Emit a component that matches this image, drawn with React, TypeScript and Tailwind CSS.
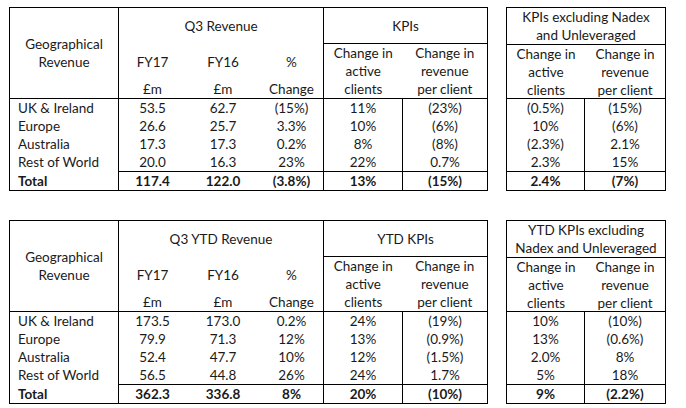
import React from "react";

type Row = { name: string; v: string[] };
type BlockData = {
  rev: string;
  kpi: string;
  ex: [string, string];
  rows: Row[];
  total: string[];
};

const blocks: BlockData[] = [
  {
    rev: "Q3 Revenue",
    kpi: "KPIs",
    ex: ["KPIs excluding Nadex", "and Unleveraged"],
    rows: [
      { name: "UK & Ireland", v: ["53.5", "62.7", "(15%)", "11%", "(23%)", "(0.5%)", "(15%)"] },
      { name: "Europe", v: ["26.6", "25.7", "3.3%", "10%", "(6%)", "10%", "(6%)"] },
      { name: "Australia", v: ["17.3", "17.3", "0.2%", "8%", "(8%)", "(2.3%)", "2.1%"] },
      { name: "Rest of World", v: ["20.0", "16.3", "23%", "22%", "0.7%", "2.3%", "15%"] },
    ],
    total: ["117.4", "122.0", "(3.8%)", "13%", "(15%)", "2.4%", "(7%)"],
  },
  {
    rev: "Q3 YTD Revenue",
    kpi: "YTD KPIs",
    ex: ["YTD KPIs excluding", "Nadex and Unleveraged"],
    rows: [
      { name: "UK & Ireland", v: ["173.5", "173.0", "0.2%", "24%", "(19%)", "10%", "(10%)"] },
      { name: "Europe", v: ["79.9", "71.3", "12%", "13%", "(0.9%)", "13%", "(0.6%)"] },
      { name: "Australia", v: ["52.4", "47.7", "10%", "12%", "(1.5%)", "2.0%", "8%"] },
      { name: "Rest of World", v: ["56.5", "44.8", "26%", "24%", "1.7%", "5%", "18%"] },
    ],
    total: ["362.3", "336.8", "8%", "20%", "(10%)", "9%", "(2.2%)"],
  },
];

function ThreeLine() {
  return (
    <div className="flex flex-col items-center">
      <div className="h-[18px]">Change in</div>
      <div className="h-[18px]">active</div>
      <div className="h-[18px]">clients</div>
    </div>
  );
}
function ThreeLine2() {
  return (
    <div className="flex flex-col items-center">
      <div className="h-[18px]">Change in</div>
      <div className="h-[18px]">revenue</div>
      <div className="h-[18px]">per client</div>
    </div>
  );
}

function Block({ d }: { d: BlockData }) {
  const cellA = (v: string, bold?: boolean) => v;
  return (
    <div className="flex">
      {/* Table A */}
      <div className="flex flex-col border border-black w-[479px]">
        {/* header */}
        <div className="flex h-[91px] border-b border-black">
          <div className="w-[109px] border-r border-black flex flex-col items-center justify-center">
            <div className="h-[18px]">Geographical</div>
            <div className="h-[18px]">Revenue</div>
          </div>
          <div className="w-[204px] flex flex-col">
            <div className="h-[36px] flex items-center justify-center">{d.rev}</div>
            <div className="flex mt-[9px]">
              <div className="w-[67px] flex flex-col items-center">
                <div className="h-[18px]">FY17</div>
                <div className="h-[18px] mt-[9px]">£m</div>
              </div>
              <div className="w-[74px] flex flex-col items-center">
                <div className="h-[18px]">FY16</div>
                <div className="h-[18px] mt-[9px]">£m</div>
              </div>
              <div className="w-[63px] flex flex-col items-center">
                <div className="h-[18px]">%</div>
                <div className="h-[18px] mt-[9px]">Change</div>
              </div>
            </div>
          </div>
          <div className="w-[164px] border-l border-black flex flex-col">
            <div className="h-[37px] border-b border-black flex items-center justify-center">{d.kpi}</div>
            <div className="flex">
              <div className="w-[79px]">
                <ThreeLine />
              </div>
              <div className="w-[85px]">
                <ThreeLine2 />
              </div>
            </div>
          </div>
        </div>
        {/* body */}
        <div className="flex">
          <div className="w-[109px] border-r border-black flex flex-col pl-[8px]">
            {d.rows.map((r) => (
              <div key={r.name} className="h-[18px]">{r.name}</div>
            ))}
            <div className="h-[18px] mt-[1px] font-bold">Total</div>
          </div>
          <div className="flex flex-col w-[368px]">
            {d.rows.map((r) => (
              <div key={r.name} className="flex h-[18px]">
                <div className="w-[67px] text-center">{cellA(r.v[0])}</div>
                <div className="w-[74px] text-center">{r.v[1]}</div>
                <div className="w-[63px] text-center">{r.v[2]}</div>
                <div className="w-[79px] border-l border-black text-center">{r.v[3]}</div>
                <div className="w-[85px] border-l border-black text-center">{r.v[4]}</div>
              </div>
            ))}
            <div className="flex h-[19px] border-t border-black font-bold">
              <div className="w-[67px] text-center">{d.total[0]}</div>
              <div className="w-[74px] text-center">{d.total[1]}</div>
              <div className="w-[63px] text-center">{d.total[2]}</div>
              <div className="w-[79px] border-l border-black text-center">{d.total[3]}</div>
              <div className="w-[85px] border-l border-black text-center">{d.total[4]}</div>
            </div>
          </div>
        </div>
      </div>
      {/* Table B */}
      <div className="ml-[18px] flex flex-col border border-black w-[160px]">
        <div className="flex flex-col h-[91px] border-b border-black">
          <div className="h-[37px] border-b border-black flex flex-col items-center">
            <div className="h-[18px] whitespace-nowrap">{d.ex[0]}</div>
            <div className="h-[18px] whitespace-nowrap">{d.ex[1]}</div>
          </div>
          <div className="flex">
            <div className="w-[78px]">
              <ThreeLine />
            </div>
            <div className="w-[80px]">
              <ThreeLine2 />
            </div>
          </div>
        </div>
        <div className="flex flex-col">
          {d.rows.map((r) => (
            <div key={r.name} className="flex h-[18px]">
              <div className="w-[77px] text-center">{r.v[5]}</div>
              <div className="w-[81px] border-l border-black text-center">{r.v[6]}</div>
            </div>
          ))}
          <div className="flex h-[19px] border-t border-black font-bold">
            <div className="w-[77px] text-center">{d.total[5]}</div>
            <div className="w-[81px] border-l border-black text-center">{d.total[6]}</div>
          </div>
        </div>
      </div>
    </div>
  );
}

export default function App() {
  return (
    <div className="w-[686px] h-[408px] bg-white text-[#1a1a1a] font-[Lato,sans-serif] text-[13.5px] leading-[18px] pl-[9px] pt-[7px] flex flex-col gap-[29px]">
      {blocks.map((b, i) => (
        <Block key={i} d={b} />
      ))}
    </div>
  );
}
